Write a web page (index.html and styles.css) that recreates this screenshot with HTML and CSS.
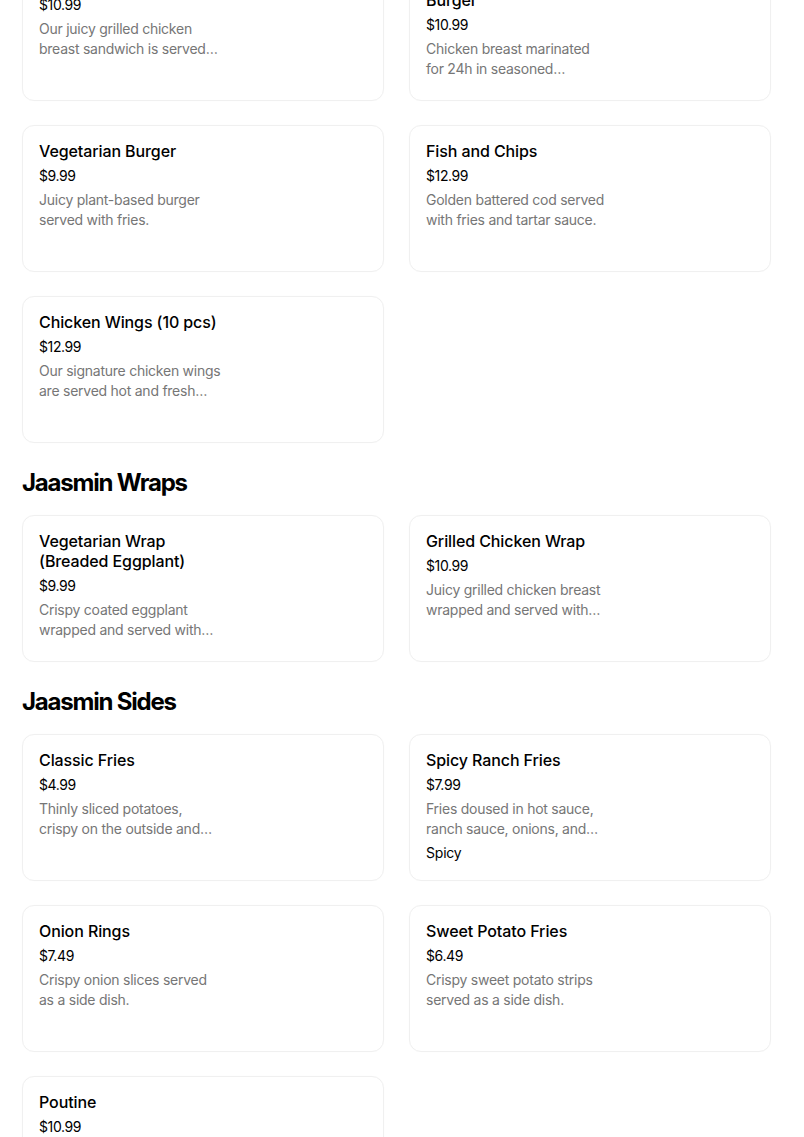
FILE: index.html
```html
<!DOCTYPE html>
<html lang="en">
<head>
<meta charset="utf-8">
<title>Jaasmin Menu</title>
<link rel="stylesheet" href="styles.css">
</head>
<body>
<main class="menu">
  <section class="section section-first">
    <div class="grid">
      <div class="card">
        <div class="title">Grilled Chicken Sandwich</div>
        <div class="price">$10.99</div>
        <div class="desc"><span>Our juicy grilled chicken</span><span>breast sandwich is served…</span></div>
      </div>
      <div class="card">
        <div class="title"><span>Jaasmin Fried Chicken</span><span>Burger</span></div>
        <div class="price">$10.99</div>
        <div class="desc"><span>Chicken breast marinated</span><span>for 24h in seasoned…</span></div>
      </div>
      <div class="card">
        <div class="title">Vegetarian Burger</div>
        <div class="price">$9.99</div>
        <div class="desc"><span>Juicy plant-based burger</span><span>served with fries.</span></div>
      </div>
      <div class="card">
        <div class="title">Fish and Chips</div>
        <div class="price">$12.99</div>
        <div class="desc"><span>Golden battered cod served</span><span>with fries and tartar sauce.</span></div>
      </div>
      <div class="card">
        <div class="title">Chicken Wings (10 pcs)</div>
        <div class="price">$12.99</div>
        <div class="desc"><span>Our signature chicken wings</span><span>are served hot and fresh…</span></div>
      </div>
    </div>
  </section>

  <section class="section">
    <h2 class="section-title">Jaasmin Wraps</h2>
    <div class="grid">
      <div class="card">
        <div class="title"><span>Vegetarian Wrap</span><span>(Breaded Eggplant)</span></div>
        <div class="price">$9.99</div>
        <div class="desc"><span>Crispy coated eggplant</span><span>wrapped and served with…</span></div>
      </div>
      <div class="card">
        <div class="title">Grilled Chicken Wrap</div>
        <div class="price">$10.99</div>
        <div class="desc"><span>Juicy grilled chicken breast</span><span>wrapped and served with…</span></div>
      </div>
    </div>
  </section>

  <section class="section">
    <h2 class="section-title">Jaasmin Sides</h2>
    <div class="grid">
      <div class="card">
        <div class="title">Classic Fries</div>
        <div class="price">$4.99</div>
        <div class="desc"><span>Thinly sliced potatoes,</span><span>crispy on the outside and…</span></div>
      </div>
      <div class="card">
        <div class="title">Spicy Ranch Fries</div>
        <div class="price">$7.99</div>
        <div class="desc"><span>Fries doused in hot sauce,</span><span>ranch sauce, onions, and…</span></div>
        <div class="tag">Spicy</div>
      </div>
      <div class="card">
        <div class="title">Onion Rings</div>
        <div class="price">$7.49</div>
        <div class="desc"><span>Crispy onion slices served</span><span>as a side dish.</span></div>
      </div>
      <div class="card">
        <div class="title">Sweet Potato Fries</div>
        <div class="price">$6.49</div>
        <div class="desc"><span>Crispy sweet potato strips</span><span>served as a side dish.</span></div>
      </div>
      <div class="card">
        <div class="title">Poutine</div>
        <div class="price">$10.99</div>
        <div class="desc"><span>Crispy fries topped with</span><span>cheese curds and gravy.</span></div>
      </div>
    </div>
  </section>
</main>
</body>
</html>
```

FILE: styles.css
```css
html, body {
  margin: 0;
  padding: 0;
  background: #ffffff;
}

body {
  font-family: Inter, "Noto Sans", "Liberation Sans", sans-serif;
  color: #000000;
  overflow: hidden;
}

.menu {
  width: 749px;
  margin: -46px 0 0 22px;
}

.section-title {
  margin: 24px 0 16px;
  font-size: 24px;
  line-height: 32px;
  font-weight: 700;
  letter-spacing: -1.2px;
  color: #000;
}

.grid {
  display: grid;
  grid-template-columns: 362px 362px;
  column-gap: 25px;
  row-gap: 24px;
}

.card {
  box-sizing: border-box;
  height: 147px;
  border: 1px solid #f0f0f0;
  border-radius: 12px;
  padding: 15px 16px 16px;
  box-shadow: 0 0 1px rgba(0, 0, 0, 0.04);
}

.title {
  font-size: 16px;
  line-height: 20px;
  font-weight: 500;
  letter-spacing: -0.1px;
  color: #000;
}

.title span,
.desc span {
  display: block;
  white-space: nowrap;
}

.price {
  margin-top: 5px;
  font-size: 14px;
  line-height: 20px;
  letter-spacing: -0.4px;
  color: #000;
}

.desc {
  margin-top: 4px;
  font-size: 14px;
  line-height: 20px;
  letter-spacing: -0.25px;
  color: #767676;
}

.tag {
  margin-top: 4px;
  font-size: 14px;
  line-height: 20px;
  letter-spacing: -0.2px;
  color: #000;
}
```
